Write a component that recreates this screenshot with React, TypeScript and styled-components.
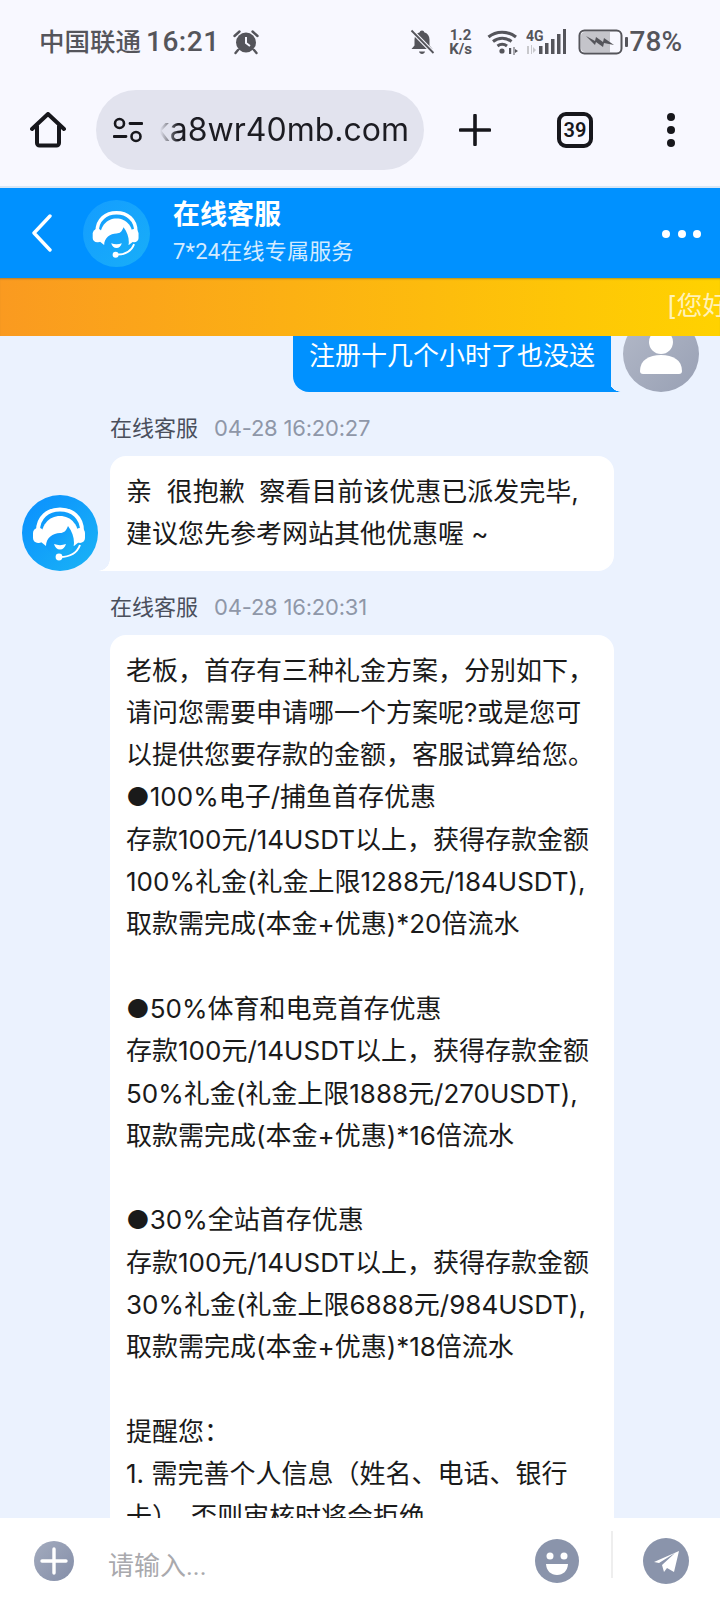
import React from "react";
import styled, { createGlobalStyle } from "styled-components";

const GlobalStyle = createGlobalStyle`
  html, body {
    margin: 0;
    padding: 0;
    background: #f8f8ff;
  }

  * {
    box-sizing: border-box;
  }
`;

const FONT = `Inter, "Noto Sans CJK SC", sans-serif`;
const NARROW_FONT = `Roboto, "Noto Sans CJK SC", sans-serif`;

const Page = styled.div`
  display: flex;
  flex-direction: column;
  width: 720px;
  height: 1610px;
  overflow: hidden;
  font-family: ${FONT};
  background: #f8f8ff;
`;

const StatusBar = styled.div`
  display: flex;
  align-items: center;
  justify-content: space-between;
  height: 84px;
  padding: 0 38px 0 39px;
  color: #55555b;
  font-family: ${NARROW_FONT};
  flex-shrink: 0;
`;

const StatusGroup = styled.div`
  display: flex;
  align-items: center;
`;

const Carrier = styled.span`
  font-size: 25.5px;
  font-weight: 500;
  line-height: 30px;
`;

const Clock = styled.span`
  margin-left: 5px;
  font-size: 28px;
  font-weight: 500;
  letter-spacing: 0.5px;
  line-height: 30px;
`;

const Battery = styled.span`
  font-size: 28px;
  font-weight: 500;
  margin-left: 1px;
  line-height: 30px;
`;

const Speed = styled.span`
  display: flex;
  flex-direction: column;
  align-items: center;
  width: 28px;
  margin: 0 12px 0 12px;
  font-size: 15px;
  font-weight: 700;
  line-height: 14px;
`;

const BrowserBar = styled.div`
  display: flex;
  align-items: center;
  height: 102px;
  padding: 0 0 10px 30px;
  flex-shrink: 0;
`;

const UrlPill = styled.div`
  display: flex;
  align-items: center;
  width: 328px;
  height: 80px;
  margin-left: 30px;
  padding: 0 15px 0 17px;
  border-radius: 40px;
  background: #e2e3ee;
`;

const UrlClip = styled.div`
  display: flex;
  justify-content: flex-end;
  flex: 1;
  margin-left: 17px;
  overflow: hidden;
  font-size: 32px;
  line-height: 40px;
  color: #1c1c22;
  white-space: nowrap;
  mask-image: linear-gradient(90deg, transparent 0, #000 18px);
`;

const BrowserAction = styled.div<{ $left: number }>`
  display: flex;
  margin-left: ${p => p.$left}px;
`;

const TabCount = styled.div`
  display: flex;
  align-items: center;
  justify-content: center;
  width: 36px;
  height: 36px;
  margin-left: 66px;
  border: 4px solid #17171c;
  border-radius: 9px;
  color: #17171c;
  font-family: ${NARROW_FONT};
  font-size: 20px;
  font-weight: 600;
`;

const ThinRule = styled.div`
  height: 2px;
  background: #d9e6f5;
  flex-shrink: 0;
`;

const ChatHeader = styled.header`
  display: flex;
  align-items: center;
  height: 90px;
  padding: 0 19px 0 31px;
  background: #0091ff;
  color: #fff;
  flex-shrink: 0;
`;

const HeaderAvatar = styled.div`
  display: flex;
  margin: 0 23px 0 30px;
`;

const HeaderText = styled.div`
  display: flex;
  flex-direction: column;
  flex: 1;
`;

const HeaderTitle = styled.div`
  font-size: 27px;
  font-weight: 700;
  line-height: 36px;
`;

const HeaderSub = styled.div`
  font-family: ${NARROW_FONT};
  font-size: 22px;
  line-height: 37px;
  letter-spacing: 0.2px;
  color: #d3ebff;
`;

const Dots = styled.div`
  display: flex;
  gap: 7.5px;
  margin-top: 1px;

  i {
    display: block;
    width: 8px;
    height: 8px;
    border-radius: 50%;
    background: #fff;
  }
`;

const Notice = styled.div`
  display: flex;
  align-items: center;
  height: 58px;
  padding: 0 0 8px 667px;
  overflow: hidden;
  white-space: nowrap;
  font-size: 26px;
  color: #fff2b8;
  background: linear-gradient(90deg, #fa9a20 0%, #ffd200 100%);
  box-shadow: inset 0 2px 2px -1px rgba(90, 90, 60, 0.45);
  position: relative;
  z-index: 1;
  flex-shrink: 0;
`;

const ChatArea = styled.main`
  flex: 1;
  min-height: 0;
  overflow: hidden;
  background: #ebf2fe;
`;

const MessageList = styled.div`
  display: flex;
  flex-direction: column;
  gap: 21px;
  margin-top: -20px;
`;

const Row = styled.div<{ $mine?: boolean }>`
  display: flex;
  align-items: flex-end;
  justify-content: ${p => (p.$mine ? "flex-end" : "flex-start")};
  gap: 12px;
  padding: ${p => (p.$mine ? "0 21px 0 0" : "0 0 0 22px")};
`;

const AvatarSlot = styled.div`
  display: flex;
  width: 76px;
  flex-shrink: 0;
`;

const MessageColumn = styled.div`
  display: flex;
  flex-direction: column;
  gap: 13px;
  width: 504px;
`;

const Meta = styled.div`
  display: flex;
  gap: 16px;
  font-size: 22px;
  line-height: 30px;
  color: #4a4f5c;

  span {
    color: #8f97a8;
    letter-spacing: -0.2px;
  }
`;

const Bubble = styled.div<{ $mine?: boolean }>`
  position: relative;
  padding: 15px 16px;
  font-size: 26px;
  line-height: 42.3px;
  white-space: pre;
  color: ${p => (p.$mine ? "#fff" : "#1a1a1a")};
  background: ${p => (p.$mine ? "#0091ff" : "#fff")};
  border-radius: ${p => (p.$mine ? "16px 0 0 16px" : "16px 16px 16px 0")};

  &::after {
    content: "";
    position: absolute;
    bottom: 0;
    width: 12px;
    height: 12px;
    ${p =>
      p.$mine
        ? "right: -10px; background: radial-gradient(circle at 100% 0, transparent 11.5px, #0091ff 12px);"
        : "left: -12px; background: radial-gradient(circle at 0 0, transparent 11.5px, #fff 12px);"}
  }
`;

const BubbleLine = styled.div`
  min-height: 42.3px;
`;

const Composer = styled.footer`
  display: flex;
  align-items: center;
  height: 92px;
  padding: 0 31px 6px 34px;
  background: #fff;
  position: relative;
  flex-shrink: 0;
`;

const Placeholder = styled.div`
  flex: 1;
  margin-left: 34px;
  padding-top: 4px;
  font-family: ${NARROW_FONT};
  font-size: 26px;
  color: #a9a9ad;
`;

const ComposerDivider = styled.div`
  width: 2px;
  height: 47px;
  margin: 0 30px 14px 32px;
  background: #eeeeee;
`;

const HeadsetFace: React.FC<{ size: number; id: string; from: string; to: string }> = ({
  size,
  id,
  from,
  to,
}) => (
  <svg width={size} height={size} viewBox="0 0 76 76">
    <defs>
      <linearGradient id={id} x1="0" y1="0" x2="1" y2="1">
        <stop offset="0" stopColor={from} />
        <stop offset="1" stopColor={to} />
      </linearGradient>
    </defs>
    <circle cx="38" cy="38" r="38" fill={`url(#${id})`} />
    <path d="M16 36C16 22 26 14.500 38 14.500S60 22 60 36" fill="none" stroke="#fff" strokeWidth="4" />
    <rect x="11" y="33" width="11" height="15" rx="5" fill="#fff" />
    <rect x="53" y="33" width="10" height="15" rx="5" fill="#fff" />
    <path d="M19 47C18 30 27 21 38 21S58 30 57 47l-5 4H24z" fill="#fff" />
    <path d="M24 51C24 43 31 38 38 38c4 0 6-2 8-7 4 5 6 11 6 17 0 8-6 12-14 12s-13-4-14-9z" fill={`url(#${id})`} />
    <path d="M32 49c4 1.500 8 1.500 12 0-1 3.500-3 5.500-6 5.500S33 52.500 32 49z" fill="#fff" />
    <path d="M58 50c-3 8-10 12-20 12" fill="none" stroke="#fff" strokeWidth="2" />
    <circle cx="37" cy="62" r="3.400" fill="#fff" />
  </svg>
);

const PersonAvatar: React.FC = () => (
  <svg width="76" height="76" viewBox="0 0 76 76">
    <defs>
      <linearGradient id="personFill" x1="0" y1="0" x2="1" y2="1">
        <stop offset="0" stopColor="#b3b9c8" />
        <stop offset="1" stopColor="#98a0b4" />
      </linearGradient>
    </defs>
    <circle cx="38" cy="38" r="38" fill="url(#personFill)" />
    <circle cx="38" cy="26" r="12" fill="#fff" />
    <path d="M17 55c0-11 9-16 21-16s21 5 21 16c0 2-1 3-3 3H20c-2 0-3-1-3-3z" fill="#fff" />
  </svg>
);

const AlarmIcon = () => (
  <svg width="26" height="26" viewBox="0 0 26 26" style={{ marginLeft: 13 }}>
    <circle cx="13" cy="13.500" r="10" fill="#55555b" />
    <path d="M1.500 7 6.500 2.500M24.500 7l-5-4.500M5 21l-2.500 3M21 21l2.500 3" stroke="#55555b" strokeWidth="2.400" strokeLinecap="round" />
    <path d="M13 8v6l4 3" fill="none" stroke="#f8f8ff" strokeWidth="2" />
  </svg>
);

const MutedBell = () => (
  <svg width="25" height="27" viewBox="0 0 25 27">
    <path d="M12 1.500c1.400 0 2 .8 2.200 1.800 3.400 1 5.300 3.800 5.300 7.200v6l3 3.500H1.500l3-3.500v-6c0-3.400 1.900-6.200 5.300-7.200.2-1 .8-1.800 2.200-1.800z" fill="#55555b" />
    <path d="M9 22.500h6c-.3 1.600-1.500 2.500-3 2.500s-2.700-.9-3-2.500z" fill="#55555b" />
    <path d="M2 2l21 21.500" stroke="#f8f8ff" strokeWidth="4" />
    <path d="M1.500 1.500l22 22.500" stroke="#55555b" strokeWidth="1.800" />
  </svg>
);

const WifiIcon = () => (
  <svg width="32" height="26" viewBox="0 0 32 26">
    <path d="M1.500 8C9 1.500 21 1.500 29 8M6 12.500c5.500-4.500 13-4.500 18.500 0M10.500 17c3-2.300 6.500-2.300 9.500 0" fill="none" stroke="#55555b" strokeWidth="3" />
    <circle cx="15" cy="22" r="2.600" fill="#55555b" />
    <path d="M22 19h2.200v6H22zM26.500 18h1v8h-1zM28 20l3 2-3 2z" fill="#55555b" />
  </svg>
);

const SignalIcon = () => (
  <svg width="42" height="26" viewBox="0 0 42 26" style={{ marginLeft: 7 }}>
    <text x="0" y="12" fontSize="14" fontWeight="700" fill="#55555b" fontFamily="Roboto, sans-serif">4G</text>
    <path d="M1 17h2v8H1zM5 16h1v9H5zM7 18l3 3-3 3z" fill="#c8c8cc" />
    <path d="M13 17h3.500v8H13zM19 14h3.500v11H19zM25 10h3.500v15H25zM31 5h3.500v20H31zM37 0h3v25h-3z" fill="#55555b" />
  </svg>
);

const BatteryIcon = () => (
  <svg width="51" height="26" viewBox="0 0 51 26" style={{ marginLeft: 10 }}>
    <rect x="1.500" y="1.500" width="42" height="23" rx="5" fill="#f8f8ff" stroke="#55555b" strokeWidth="2" />
    <path d="M3 7a4 4 0 0 1 4-4h25v20H7a4 4 0 0 1-4-4z" fill="#c4c4ca" />
    <path d="M8 7l9 5 1-4 7 5 1-4 10 7-10-2-1 4-7-5-1 3z" fill="#55555b" />
    <rect x="47" y="8" width="3" height="10" rx="1" fill="#55555b" />
  </svg>
);

const HomeIcon = () => (
  <svg width="36" height="36" viewBox="0 0 36 36">
    <path d="M2 17 18 2l16 15M7 14v17a2.500 2.500 0 0 0 2.500 2.500h17A2.500 2.500 0 0 0 29 31V14" fill="none" stroke="#17171c" strokeWidth="4" strokeLinecap="round" strokeLinejoin="round" />
  </svg>
);

const TuneIcon = () => (
  <svg width="30" height="26" viewBox="0 0 30 26" style={{ flexShrink: 0 }}>
    <circle cx="6.500" cy="6.500" r="4.500" fill="none" stroke="#17171c" strokeWidth="2.600" />
    <circle cx="23" cy="19.500" r="4.500" fill="none" stroke="#17171c" strokeWidth="2.600" />
    <path d="M17 6.500h12M1 19.500h12" stroke="#17171c" strokeWidth="2.800" strokeLinecap="round" />
  </svg>
);

const PlusIcon = () => (
  <svg width="32" height="32" viewBox="0 0 32 32">
    <path d="M16 1.500v29M1.500 16h29" stroke="#17171c" strokeWidth="3.600" strokeLinecap="round" />
  </svg>
);

const MoreIcon = () => (
  <svg width="8" height="34" viewBox="0 0 8 34">
    <circle cx="4" cy="4" r="4" fill="#17171c" />
    <circle cx="4" cy="17" r="4" fill="#17171c" />
    <circle cx="4" cy="30" r="4" fill="#17171c" />
  </svg>
);

const BackIcon = () => (
  <svg width="22" height="38" viewBox="0 0 22 38">
    <path d="M19 2 3 19l16 17" fill="none" stroke="#fff" strokeWidth="3.400" strokeLinecap="round" strokeLinejoin="round" />
  </svg>
);

const AddIcon = () => (
  <svg width="40" height="40" viewBox="0 0 40 40">
    <defs>
      <linearGradient id="addFill" x1="0" y1="0" x2="1" y2="1">
        <stop offset="0" stopColor="#a3abbe" />
        <stop offset="1" stopColor="#848ea8" />
      </linearGradient>
    </defs>
    <circle cx="20" cy="20" r="20" fill="url(#addFill)" />
    <path d="M20 8v24M8 20h24" stroke="#fff" strokeWidth="3.400" strokeLinecap="round" />
  </svg>
);

const EmojiIcon = () => (
  <svg width="44" height="44" viewBox="0 0 44 44">
    <circle cx="22" cy="22" r="22" fill="#8a94ab" />
    <circle cx="15" cy="17" r="3.500" fill="#fff" />
    <circle cx="29" cy="17" r="3.500" fill="#fff" />
    <path d="M11 25h22c-.5 7-5 11-11 11s-10.500-4-11-11z" fill="#fff" />
  </svg>
);

const SendIcon = () => (
  <svg width="46" height="46" viewBox="0 0 46 46">
    <circle cx="23" cy="23" r="23" fill="#8a94ab" />
    <path d="M11 24 36 13l-5 21-7-4-3 4-2-7 13-12-16 10z" fill="#fff" />
  </svg>
);

const firstReply = ["亲  很抱歉  察看目前该优惠已派发完毕,", "建议您先参考网站其他优惠喔 ~"];

const secondReply = [
  "老板，首存有三种礼金方案，分别如下，",
  "请问您需要申请哪一个方案呢?或是您可",
  "以提供您要存款的金额，客服试算给您。",
  "●100%电子/捕鱼首存优惠",
  "存款100元/14USDT以上，获得存款金额",
  "100%礼金(礼金上限1288元/184USDT),",
  "取款需完成(本金+优惠)*20倍流水",
  "",
  "●50%体育和电竞首存优惠",
  "存款100元/14USDT以上，获得存款金额",
  "50%礼金(礼金上限1888元/270USDT),",
  "取款需完成(本金+优惠)*16倍流水",
  "",
  "●30%全站首存优惠",
  "存款100元/14USDT以上，获得存款金额",
  "30%礼金(礼金上限6888元/984USDT),",
  "取款需完成(本金+优惠)*18倍流水",
  "",
  "提醒您：",
  "1. 需完善个人信息（姓名、电话、银行",
  "卡），否则审核时将会拒绝",
];

interface AgentMessageProps {
  time: string;
  lines: string[];
  avatarId?: string;
}

// the avatar sits at the bubble's foot, so a long reply keeps only the empty slot in view
const AgentMessage: React.FC<AgentMessageProps> = ({ time, lines, avatarId }) => (
  <Row>
    <AvatarSlot>
      {avatarId && <HeadsetFace size={76} id={avatarId} from="#0a8fff" to="#1ab4f5" />}
    </AvatarSlot>
    <MessageColumn>
      <Meta>
        在线客服<span>{time}</span>
      </Meta>
      <Bubble>
        {lines.map((line, index) => (
          <BubbleLine key={index}>{line}</BubbleLine>
        ))}
      </Bubble>
    </MessageColumn>
  </Row>
);

const App: React.FC = () => {
  return (
    <Page>
      <GlobalStyle />
      <StatusBar>
        <StatusGroup>
          <Carrier>中国联通</Carrier>
          <Clock>16:21</Clock>
          <AlarmIcon />
        </StatusGroup>
        <StatusGroup>
          <MutedBell />
          <Speed>
            <span>1.2</span>
            <span>K/s</span>
          </Speed>
          <WifiIcon />
          <SignalIcon />
          <BatteryIcon />
          <Battery>78%</Battery>
        </StatusGroup>
      </StatusBar>

      <BrowserBar>
        <HomeIcon />
        <UrlPill>
          <TuneIcon />
          <UrlClip>ka8wr40mb.com</UrlClip>
        </UrlPill>
        <BrowserAction $left={35}>
          <PlusIcon />
        </BrowserAction>
        <TabCount>39</TabCount>
        <BrowserAction $left={74}>
          <MoreIcon />
        </BrowserAction>
      </BrowserBar>
      <ThinRule />

      <ChatHeader>
        <BackIcon />
        <HeaderAvatar>
          <HeadsetFace size={67} id="headerFace" from="#149dff" to="#18aef8" />
        </HeaderAvatar>
        <HeaderText>
          <HeaderTitle>在线客服</HeaderTitle>
          <HeaderSub>7*24在线专属服务</HeaderSub>
        </HeaderText>
        <Dots>
          <i />
          <i />
          <i />
        </Dots>
      </ChatHeader>
      <Notice>[您好，欢迎光临在线客服</Notice>

      <ChatArea>
        <MessageList>
          <Row $mine>
            <Bubble $mine>注册十几个小时了也没送</Bubble>
            <AvatarSlot>
              <PersonAvatar />
            </AvatarSlot>
          </Row>
          <AgentMessage time="04-28 16:20:27" lines={firstReply} avatarId="faceOne" />
          <AgentMessage time="04-28 16:20:31" lines={secondReply} />
        </MessageList>
      </ChatArea>

      <Composer>
        <AddIcon />
        <Placeholder>请输入...</Placeholder>
        <EmojiIcon />
        <ComposerDivider />
        <SendIcon />
      </Composer>
    </Page>
  );
};

export default App;
